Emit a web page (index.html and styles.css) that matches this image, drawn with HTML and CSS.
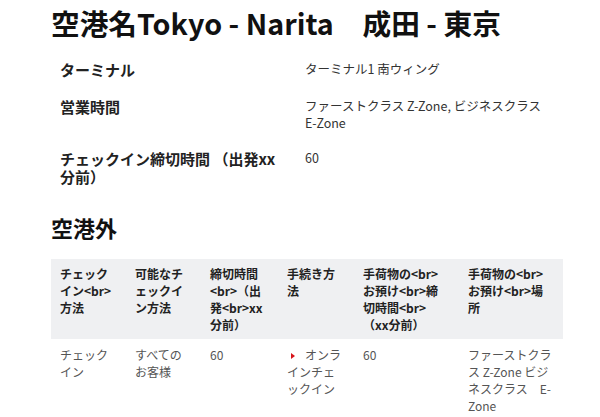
FILE: index.html
```html
<!DOCTYPE html>
<html lang="ja">
<head>
<meta charset="utf-8">
<link rel="stylesheet" href="styles.css">
</head>
<body>
<main class="page">
  <h1 class="title">空港名Tokyo - Narita　成田 - 東京</h1>
  <dl class="info">
    <dt>ターミナル</dt>
    <dd>ターミナル1 南ウィング</dd>
    <dt>営業時間</dt>
    <dd>ファーストクラス Z-Zone, ビジネスクラス E-Zone</dd>
    <dt>チェックイン締切時間 （出発xx分前）</dt>
    <dd>60</dd>
  </dl>
  <h2 class="section">空港外</h2>
  <table class="checkin">
    <colgroup>
      <col class="c1"><col class="c2"><col class="c3"><col class="c4"><col class="c5"><col class="c6">
    </colgroup>
    <thead>
      <tr>
        <th>チェックイン&lt;br&gt;方法</th>
        <th>可能なチェックイン方法</th>
        <th>締切時間&lt;br&gt;（出発&lt;br&gt;xx分前）</th>
        <th>手続き方法</th>
        <th>手荷物の&lt;br&gt;お預け&lt;br&gt;締切時間&lt;br&gt;（xx分前）</th>
        <th>手荷物の&lt;br&gt;お預け&lt;br&gt;場所</th>
      </tr>
    </thead>
    <tbody>
      <tr>
        <td>チェックイン</td>
        <td>すべてのお客様</td>
        <td>60</td>
        <td><span class="arrow"></span>オンラインチェックイン</td>
        <td>60</td>
        <td>ファーストクラス Z-Zone ビジネスクラス　E-Zone</td>
      </tr>
    </tbody>
  </table>
</main>
</body>
</html>
```
FILE: styles.css
```css
html, body {
  margin: 0;
  padding: 0;
  background: #fff;
}
body {
  font-family: "Noto Sans CJK JP", "Noto Sans", sans-serif;
  color: #222;
}
.page {
  width: 512px;
  padding: 3px 0 0 51px;
}
.title {
  margin: 0;
  font-size: 28.7px;
  line-height: 40px;
  font-weight: 700;
  color: #111;
  white-space: nowrap;
}
.info {
  margin: 18px 0 0;
  padding: 0 8px 0 9px;
  display: grid;
  grid-template-columns: 245px 1fr;
  row-gap: 19px;
}
.info dt {
  margin: 0;
  font-size: 15px;
  line-height: 18px;
  font-weight: 700;
  color: #222;
  padding-right: 20px;
}
.info dd {
  margin: 0;
  font-size: 12.5px;
  line-height: 16.5px;
  color: #333;
}
.section {
  margin: 26px 0 0;
  font-size: 22px;
  line-height: 30px;
  font-weight: 700;
  color: #111;
}
.checkin {
  margin-top: 17px;
  width: 512px;
  border-collapse: collapse;
  table-layout: fixed;
  font-size: 12px;
  line-height: 17px;
}
.c1 { width: 75px; }
.c2 { width: 75px; }
.c3 { width: 77px; }
.c4 { width: 76px; }
.c5 { width: 105px; }
.c6 { width: 104px; }
.checkin th {
  background: #eff0f2;
  text-align: left;
  vertical-align: top;
  font-weight: 700;
  color: #222;
  padding: 6px 10px 6px 9px;
}
.checkin td {
  vertical-align: top;
  color: #555;
  padding: 7px 10px 7px 9px;
}
.checkin td:last-child,
.checkin th:last-child {
  padding-right: 9px;
}
.arrow {
  display: inline-block;
  width: 0;
  height: 0;
  border-top: 3px solid transparent;
  border-bottom: 3px solid transparent;
  border-left: 4px solid #d7141a;
  margin: 0 10px 1px 4px;
  vertical-align: middle;
}
```
